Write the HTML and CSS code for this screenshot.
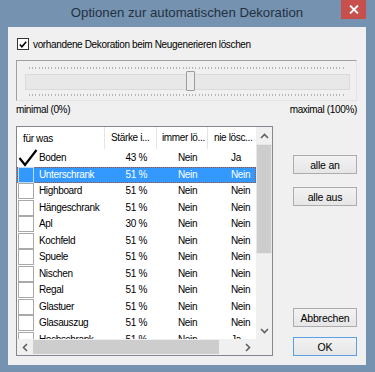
FILE: index.html
```
<!DOCTYPE html>
<html lang="de">
<head>
<meta charset="utf-8">
<title>Optionen zur automatischen Dekoration</title>
<link rel="stylesheet" href="styles.css">
</head>
<body>
<div class="window">
  <div class="titlebar">
    <div class="title">Optionen zur automatischen Dekoration</div>
    <div class="close"><svg width="10" height="9" viewBox="0 0 10 9"><path d="M1 0.5 L9 8.5 M9 0.5 L1 8.5" stroke="#fff" stroke-width="1.8"/></svg></div>
  </div>
  <div class="content">
    <label class="chk-row">
      <span class="chk"><svg width="11" height="11" viewBox="0 0 11 11"><path d="M2 5.5 L4.3 8 L9 2.5" fill="none" stroke="#000" stroke-width="1.7"/></svg></span>
      <span>vorhandene Dekoration beim Neugenerieren löschen</span>
    </label>
    <div class="trackbox">
      <div class="ticks"></div>
      <div class="channel"><div class="thumb"></div></div>
      <div class="ticks"></div>
    </div>
    <div class="range-labels"><span>minimal (0%)</span><span>maximal (100%)</span></div>
    <div class="lower">
      <div class="list">
        <div class="list-main">
          <div class="list-view">
            <div class="lhead">
              <div class="c1 hc">für was</div>
              <div class="c2 hc">Stärke i...</div>
              <div class="c3 hc">immer lö...</div>
              <div class="c4 hc">nie lösc...</div>
            </div>
            <div class="rows">
              <div class="row"><div class="c1"><span class="box checked"><svg width="20" height="18" viewBox="0 0 20 18"><path d="M1.5 9 L7 16 L18.5 1" fill="none" stroke="#000" stroke-width="2.2"/></svg></span>Boden</div><div class="c2">43 %</div><div class="c3">Nein</div><div class="c4">Ja</div></div>
              <div class="row sel"><div class="c1"><span class="box"></span>Unterschrank</div><div class="c2">51 %</div><div class="c3">Nein</div><div class="c4">Nein</div></div>
              <div class="row"><div class="c1"><span class="box"></span>Highboard</div><div class="c2">51 %</div><div class="c3">Nein</div><div class="c4">Nein</div></div>
              <div class="row"><div class="c1"><span class="box"></span>Hängeschrank</div><div class="c2">51 %</div><div class="c3">Nein</div><div class="c4">Nein</div></div>
              <div class="row"><div class="c1"><span class="box"></span>Apl</div><div class="c2">30 %</div><div class="c3">Nein</div><div class="c4">Nein</div></div>
              <div class="row"><div class="c1"><span class="box"></span>Kochfeld</div><div class="c2">51 %</div><div class="c3">Nein</div><div class="c4">Nein</div></div>
              <div class="row"><div class="c1"><span class="box"></span>Spuele</div><div class="c2">51 %</div><div class="c3">Nein</div><div class="c4">Nein</div></div>
              <div class="row"><div class="c1"><span class="box"></span>Nischen</div><div class="c2">51 %</div><div class="c3">Nein</div><div class="c4">Nein</div></div>
              <div class="row"><div class="c1"><span class="box"></span>Regal</div><div class="c2">51 %</div><div class="c3">Nein</div><div class="c4">Nein</div></div>
              <div class="row"><div class="c1"><span class="box"></span>Glastuer</div><div class="c2">51 %</div><div class="c3">Nein</div><div class="c4">Nein</div></div>
              <div class="row"><div class="c1"><span class="box"></span>Glasauszug</div><div class="c2">51 %</div><div class="c3">Nein</div><div class="c4">Nein</div></div>
              <div class="row"><div class="c1"><span class="box"></span>Hochschrank</div><div class="c2">51 %</div><div class="c3">Nein</div><div class="c4">Ja</div></div>
            </div>
          </div>
          <div class="vscroll">
            <div class="arrow"><svg width="9" height="6" viewBox="0 0 9 6"><path d="M1 5 L4.5 1.5 L8 5" fill="none" stroke="#606060" stroke-width="1.6"/></svg></div>
            <div class="vthumb"></div>
            <div class="vtrack"></div>
            <div class="arrow"><svg width="9" height="6" viewBox="0 0 9 6"><path d="M1 1 L4.5 4.5 L8 1" fill="none" stroke="#606060" stroke-width="1.6"/></svg></div>
          </div>
        </div>
        <div class="hscroll-row">
          <div class="hscroll">
            <div class="harrow"><svg width="6" height="9" viewBox="0 0 6 9"><path d="M5 1 L1.5 4.5 L5 8" fill="none" stroke="#606060" stroke-width="1.6"/></svg></div>
            <div class="hthumb"></div>
            <div class="htrack"></div>
            <div class="harrow"><svg width="6" height="9" viewBox="0 0 6 9"><path d="M1 1 L4.5 4.5 L1 8" fill="none" stroke="#606060" stroke-width="1.6"/></svg></div>
          </div>
          <div class="corner"></div>
        </div>
      </div>
      <div class="buttons">
        <button class="btn first">alle an</button>
        <button class="btn">alle aus</button>
        <div class="spacer"></div>
        <button class="btn">Abbrechen</button>
        <button class="btn default">OK</button>
      </div>
    </div>
  </div>
</div>
</body>
</html>
```
FILE: styles.css
```
* { box-sizing: border-box; }
html, body { margin: 0; padding: 0; }
body {
  width: 375px;
  height: 372px;
  overflow: hidden;
  font-family: "Liberation Sans", Arial, sans-serif;
  font-size: 10px;
  letter-spacing: -0.35px;
  color: #000;
}
.window {
  width: 375px;
  height: 372px;
  background: #7592b0;
  padding: 0 9px 8px 8px;
  display: flex;
  flex-direction: column;
}
.titlebar {
  height: 27px;
  flex: none;
  display: flex;
  align-items: flex-start;
  justify-content: center;
  position: relative;
}
.title {
  font-family: "Liberation Sans", Arial, sans-serif;
  font-size: 13.2px;
  letter-spacing: 0;
  color: #233140;
  margin-top: 5px;
}
.close {
  position: absolute;
  right: 0;
  top: 0;
  width: 25px;
  height: 19px;
  background: #c7504d;
  display: flex;
  align-items: center;
  justify-content: center;
}
.content {
  flex: 1;
  background: #f0f0f0;
  padding: 11px 9px 9px 8px;
  display: flex;
  flex-direction: column;
}
.chk-row {
  display: flex;
  align-items: center;
  height: 12px;
  gap: 4px;
  padding-left: 1px;
}
.chk {
  width: 12px;
  height: 12px;
  border: 1px solid #333;
  background: #fff;
  display: flex;
  align-items: center;
  justify-content: center;
}
.trackbox {
  margin-top: 10px;
  height: 41px;
  border-top: 1px solid #a0a0a0;
  border-left: 1px solid #a0a0a0;
  border-right: 1px solid #e3e3e3;
  border-bottom: 1px solid #e3e3e3;
  padding: 6px 6px 0 8px;
  display: flex;
  flex-direction: column;
}
.ticks {
  height: 2px;
  margin: 0 4px 0 4px;
  background: repeating-linear-gradient(90deg, #b4b4b4 0 1px, transparent 1px 3.2px);
}
.channel {
  margin: 5px 0 4px 0;
  height: 16px;
  background: #e8e8e8;
  border: 1px solid #dadada;
  position: relative;
}
.thumb {
  position: absolute;
  left: 160px;
  top: -4px;
  width: 9px;
  height: 20px;
  background: #ececec;
  border: 1px solid #9c9c9c;
  border-radius: 1px;
}
.range-labels {
  display: flex;
  justify-content: space-between;
  height: 14px;
  line-height: 14px;
  margin-top: 2px;
}
.lower {
  margin-top: 9px;
  flex: 1;
  display: flex;
  gap: 20px;
}
.list {
  width: 257px;
  border: 1px solid #828790;
  background: #fff;
  display: flex;
  flex-direction: column;
  height: 230px;
}
.list-main {
  flex: 1;
  display: flex;
  min-height: 0;
}
.list-view {
  flex: 1;
  overflow: hidden;
  display: flex;
  flex-direction: column;
}
.lhead {
  display: flex;
  height: 22px;
  flex: none;
}
.hc {
  border-right: 1px solid #e5e5e5;
  line-height: 21px;
}
.lhead .c1 { padding-left: 6px; }
.lhead .c2 { padding-left: 6px; text-align: left; padding-right: 0; }
.lhead .c3 { padding-left: 5px; }
.lhead .c4 { padding-left: 6px; border-right: none; }
.c1 { width: 88px; display: flex; align-items: center; white-space: nowrap; }
.c2 { width: 52px; text-align: right; padding-right: 10px; white-space: nowrap; }
.c3 { width: 51px; padding-left: 21px; white-space: nowrap; }
.c4 { width: 47px; padding-left: 23px; white-space: nowrap; }
.rows { flex: 1; overflow: hidden; padding-top: 1px; }
.row {
  display: flex;
  height: 16.5px;
  line-height: 16.5px;
  position: relative;
}
.row .c1 { padding-left: 1px; }
.box {
  width: 16px;
  height: 16px;
  border: 1px solid #a9a9a9;
  background: #fff;
  margin-right: 5px;
  flex: none;
  position: relative;
}
.box.checked { border-color: transparent; background: transparent; }
.box.checked svg { position: absolute; left: -1px; top: -2px; }
.row.sel {
  background: #3399ff;
  color: #fff;
  outline: 1px dotted #b04a2a;
  outline-offset: -1px;
}
.row.sel .box { background: #3399ff; border-color: #bcdcff; }
.vscroll {
  width: 16px;
  flex: none;
  background: #e8e8e8;
  display: flex;
  flex-direction: column;
}
.arrow {
  height: 17px;
  background: #f0f0f0;
  display: flex;
  align-items: center;
  justify-content: center;
  flex: none;
}
.vthumb {
  height: 108px;
  background: #cdcdcd;
  margin: 1px 1px;
  flex: none;
}
.vtrack { flex: 1; background: #f0f0f0; }
.hscroll-row {
  height: 16px;
  flex: none;
  display: flex;
}
.hscroll {
  flex: 1;
  display: flex;
  background: #f0f0f0;
}
.harrow {
  width: 16px;
  flex: none;
  display: flex;
  align-items: center;
  justify-content: center;
}
.hthumb {
  width: 186px;
  background: #cdcdcd;
  margin: 1px 0;
}
.htrack { flex: 1; }
.corner { width: 16px; background: #f0f0f0; }
.buttons {
  width: 64px;
  display: flex;
  flex-direction: column;
}
.btn {
  font-family: "Liberation Sans", Arial, sans-serif;
  font-size: 10.5px;
  letter-spacing: -0.2px;
  color: #000;
  height: 19px;
  width: 64px;
  padding: 0;
  border: 1px solid #acacac;
  background: linear-gradient(#f2f2f2, #e6e6e6);
  flex: none;
}
.btn.first { margin-top: 29px; }
.btn + .btn { margin-top: 13px; }
.spacer { flex: 1; }
.spacer + .btn { margin-top: 0; }
.btn.default { margin-top: 10px; border-color: #5aa0e8; }
```
